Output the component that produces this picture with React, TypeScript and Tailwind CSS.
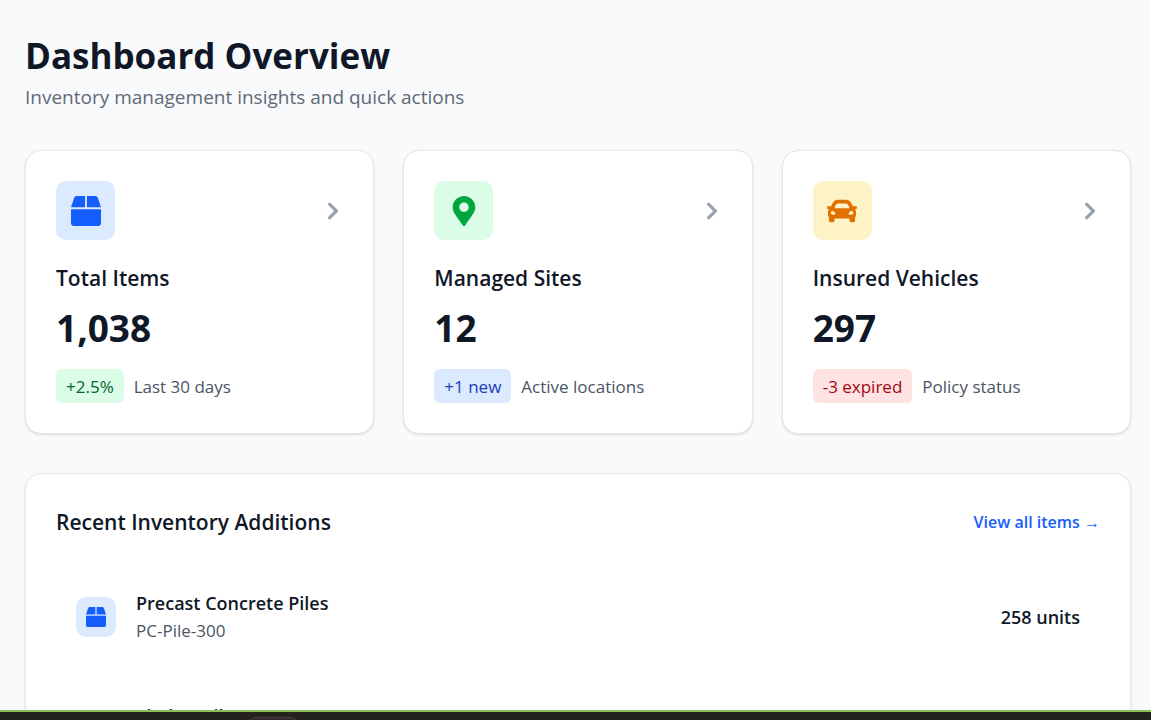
import { FaBox, FaCar, FaChevronRight, FaMapMarkerAlt } from "react-icons/fa";
import type { IconType } from "react-icons";

type Stat = {
  title: string;
  value: string;
  badge: string;
  note: string;
  icon: IconType;
  iconStyle: string;
  badgeStyle: string;
};

const stats: Stat[] = [
  {
    title: "Total Items",
    value: "1,038",
    badge: "+2.5%",
    note: "Last 30 days",
    icon: FaBox,
    iconStyle: "bg-blue-100 text-[#155dfc]",
    badgeStyle: "bg-green-100 text-green-800",
  },
  {
    title: "Managed Sites",
    value: "12",
    badge: "+1 new",
    note: "Active locations",
    icon: FaMapMarkerAlt,
    iconStyle: "bg-green-100 text-[#00a63e]",
    badgeStyle: "bg-blue-100 text-blue-800",
  },
  {
    title: "Insured Vehicles",
    value: "297",
    badge: "-3 expired",
    note: "Policy status",
    icon: FaCar,
    iconStyle: "bg-amber-100 text-[#e17100]",
    badgeStyle: "bg-red-100 text-red-800",
  },
];

const items = [
  { name: "Precast Concrete Piles", code: "PC-Pile-300", units: "258 units" },
  { name: "Timber Piles", code: "TP-Pile-200", units: "120 units" },
];

function StatCard({ stat }: { stat: Stat }) {
  const Icon = stat.icon;
  return (
    <a href="#" className="block rounded-2xl border border-gray-200 bg-white p-[30px] shadow-sm">
      <div className="flex items-center justify-between">
        <span className={`flex size-[59px] items-center justify-center rounded-[10px] ${stat.iconStyle}`}>
          <Icon className="size-[30px]" />
        </span>
        <FaChevronRight className="size-5 text-[#99a1af]" />
      </div>
      <h2 className="mt-5 text-[21px] leading-9 font-semibold">{stat.title}</h2>
      <p className="mt-[7px] text-[37px] leading-[50px] font-bold">{stat.value}</p>
      <div className="mt-4 flex items-center gap-2.5 text-[17px] leading-6">
        <span className={`rounded-md px-2.5 pt-1.5 pb-1 ${stat.badgeStyle}`}>{stat.badge}</span>
        <span className="pt-0.5 text-[#4a5565]">{stat.note}</span>
      </div>
    </a>
  );
}

export default function App() {
  return (
    <div className="flex h-screen flex-col overflow-hidden bg-gray-50 font-['Open_Sans','Noto_Sans',sans-serif] text-[#101828]">
      <main className="min-h-0 flex-1 overflow-hidden pt-8 pr-5 pl-[25px]">
        <header>
          <h1 className="text-[35px] leading-[47px] font-bold">Dashboard Overview</h1>
          <p className="mt-1 text-[19px] leading-7 text-[#5f6978]">Inventory management insights and quick actions</p>
        </header>
        <section className="mt-[39px] grid grid-cols-3 gap-[29px]">
          {stats.map((stat) => (
            <StatCard key={stat.title} stat={stat} />
          ))}
        </section>
        <section className="mt-[39px] rounded-2xl border border-gray-200 bg-white p-[30px] shadow-sm">
          <div className="flex items-center justify-between">
            <h2 className="text-[21px] leading-9 font-semibold">Recent Inventory Additions</h2>
            <a href="#" className="text-[16px] leading-6 font-semibold text-[#155dfc]">View all items →</a>
          </div>
          <ul className="mt-[29px] flex flex-col gap-[17px]">
            {items.map((item) => (
              <li key={item.code} className="flex items-center justify-between p-5">
                <div className="flex items-center gap-5">
                  <span className="flex size-10 items-center justify-center rounded-[10px] bg-blue-100 text-[#155dfc]">
                    <FaBox className="size-5" />
                  </span>
                  <div>
                    <h3 className="text-[18px] leading-7 font-semibold">{item.name}</h3>
                    <p className="text-[17px] leading-7 text-[#4a5565]">{item.code}</p>
                  </div>
                </div>
                <span className="text-[18px] leading-7 font-semibold">{item.units}</span>
              </li>
            ))}
          </ul>
        </section>
      </main>
      <footer className="h-2.5 shrink-0 overflow-hidden border-t-2 border-[#8fbc5a] bg-[#23221c] pt-[5px] pl-[249px]">
        <div className="h-5 w-12 rounded-md border border-[#453a44] bg-[#332a30]" />
      </footer>
    </div>
  );
}
